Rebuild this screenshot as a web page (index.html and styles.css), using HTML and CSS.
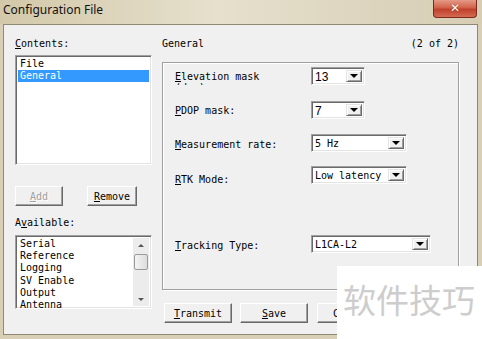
FILE: index.html
```html
<!DOCTYPE html>
<html lang="en">
<head>
  <meta charset="UTF-8">
  <meta name="viewport" content="width=device-width, initial-scale=1.0">
  <title>Configuration File</title>
  <link rel="stylesheet" href="styles.css">
</head>
<body>

  <div class="window">
    <div class="titlebar">
      <span class="title">Configuration File</span>
      <span class="close">&#x2715;</span>
    </div>

    <div class="client">
      <div class="left-col">
        <div class="label"><u>C</u>ontents:</div>
        <div class="listbox contents">
          <div class="item">File</div>
          <div class="item selected">General</div>
        </div>

        <div class="btn-row">
          <button class="btn btn-add" disabled><u>A</u>dd</button>
          <button class="btn btn-remove"><u>R</u>emove</button>
        </div>

        <div class="label label-avail">A<u>v</u>ailable:</div>
        <div class="listbox available">
          <div class="items">
            <div class="item">Serial</div>
            <div class="item">Reference</div>
            <div class="item">Logging</div>
            <div class="item">SV Enable</div>
            <div class="item">Output</div>
            <div class="item">Antenna</div>
          </div>
          <div class="scrollbar">
            <div class="sb-arrow"><span class="tri-up"></span></div>
            <div class="sb-track"><div class="sb-thumb"></div></div>
            <div class="sb-arrow"><span class="tri-down"></span></div>
          </div>
        </div>
      </div>

      <div class="right-col">
        <div class="header">
          <span>General</span>
          <span>(2 of 2)</span>
        </div>

        <div class="group">
          <div class="row r1">
            <div class="field-label elev"><u>E</u>levation mask<br>(deg)</div>
            <div class="combo w-small"><span class="value sans">13</span><span class="drop"><span class="tri-down"></span></span></div>
          </div>
          <div class="row r2">
            <div class="field-label"><u>P</u>DOP mask:</div>
            <div class="combo w-small"><span class="value sans">7</span><span class="drop"><span class="tri-down"></span></span></div>
          </div>
          <div class="row r3">
            <div class="field-label"><u>M</u>easurement rate:</div>
            <div class="combo w-mid"><span class="value">5 Hz</span><span class="drop"><span class="tri-down"></span></span></div>
          </div>
          <div class="row r4">
            <div class="field-label"><u>R</u>TK Mode:</div>
            <div class="combo w-mid"><span class="value">Low latency</span><span class="drop"><span class="tri-down"></span></span></div>
          </div>
          <div class="row r5">
            <div class="field-label"><u>T</u>racking Type:</div>
            <div class="combo w-wide"><span class="value">L1CA-L2</span><span class="drop"><span class="tri-down"></span></span></div>
          </div>
        </div>

        <div class="bottom-buttons">
          <button class="btn btn-wide"><u>T</u>ransmit</button>
          <button class="btn btn-wide"><u>S</u>ave</button>
          <button class="btn btn-wide">Cancel</button>
        </div>
      </div>
    </div>

    <div class="watermark">软件技巧</div>
  </div>

</body>
</html>
```

FILE: styles.css
```css
* {
  box-sizing: border-box;
}

body {
  margin: 0;
  width: 482px;
  height: 339px;
  overflow: hidden;
  background-color: #d8cfb6;
  font-family: "DejaVu Sans Mono", "Liberation Mono", monospace;
  font-size: 10px;
  color: #000;
}

.window {
  position: relative;
  height: 339px;
}

/* title bar */
.titlebar {
  height: 24px;
  display: flex;
  justify-content: space-between;
  align-items: flex-start;
  padding-left: 3px;
  background: linear-gradient(to right, #d3c8a9 0%, #e6e0cd 45%, #ddd5bf 75%, #d6cdb3 100%);
}

.title {
  font-family: "Noto Sans", sans-serif;
  font-size: 12px;
  line-height: 20px;
  color: #111;
}

.close {
  width: 44px;
  height: 18px;
  margin-right: 5px;
  border: 1px solid #7d2a1c;
  border-top: none;
  border-radius: 0 0 4px 4px;
  background: linear-gradient(to bottom, #e59a86 0%, #d2624a 45%, #c0412c 55%, #d36b52 100%);
  color: #fff;
  font-family: "DejaVu Sans", sans-serif;
  font-size: 12px;
  font-weight: bold;
  line-height: 16px;
  text-align: center;
  text-shadow: 0 0 1px #6d1d10;
}

/* client area */
.client {
  height: 311px;
  margin: 0 4px 0 3px;
  border: 1px solid #8f8873;
  background-color: #f0f0f0;
  display: flex;
  padding: 13px 0 0 11px;
}

.label {
  height: 12px;
  line-height: 12px;
}

/* list boxes */
.listbox {
  background-color: #fff;
  border: 1px solid;
  border-color: #a0a0a0 #fff #fff #a0a0a0;
  box-shadow: inset 1px 1px #696969, inset -1px -1px #e3e3e3;
  padding: 2px;
}

.contents {
  width: 137px;
  height: 110px;
  margin-top: 5px;
}

.item {
  height: 12px;
  line-height: 12px;
  padding-left: 2px;
  white-space: nowrap;
}

.item.selected {
  background-color: #3399ff;
  color: #fff;
}

.available {
  width: 137px;
  height: 74px;
  margin-top: 6px;
  display: flex;
  padding: 2px 2px 2px 2px;
}

.available .items {
  flex: 1;
}

.available .item {
  height: 12.2px;
  line-height: 12px;
}

.scrollbar {
  width: 16px;
  display: flex;
  flex-direction: column;
  background-color: #ececec;
}

.sb-arrow {
  height: 14px;
  display: flex;
  align-items: center;
  justify-content: center;
}

.sb-track {
  flex: 1;
  padding: 2px 1px 0 1px;
}

.sb-thumb {
  height: 16px;
  border: 1px solid #9a9a9a;
  border-radius: 2px;
  background: linear-gradient(to right, #f4f4f4, #dcdcdc);
}

.tri-up,
.tri-down {
  display: block;
  width: 0;
  height: 0;
  border-left: 4px solid transparent;
  border-right: 4px solid transparent;
}

.tri-up {
  border-bottom: 4px solid #444;
}

.tri-down {
  border-top: 4px solid #000;
}

.sb-arrow .tri-up,
.sb-arrow .tri-down {
  border-left-width: 3px;
  border-right-width: 3px;
  border-top-color: #555;
  border-bottom-color: #555;
}

.sb-arrow .tri-down {
  border-top-width: 3px;
}

.sb-arrow .tri-up {
  border-bottom-width: 3px;
}

/* buttons */
.btn {
  height: 20px;
  padding: 0;
  font-family: inherit;
  font-size: 10px;
  color: #000;
  background-color: #f0f0f0;
  border: 1px solid;
  border-color: #fff #696969 #696969 #fff;
  box-shadow: inset -1px -1px #a0a0a0;
}

.btn:disabled {
  color: #a0a0a0;
  text-shadow: 1px 1px #fff;
}

.btn-row {
  display: flex;
  margin-top: 21px;
}

.btn-add {
  width: 48px;
}

.btn-remove {
  width: 50px;
  margin-left: 24px;
}

.label-avail {
  margin-top: 11px;
}

/* right column */
.right-col {
  margin-left: 10px;
  width: 298px;
}

.header {
  height: 12px;
  line-height: 12px;
  display: flex;
  justify-content: space-between;
  padding-right: 1px;
}

.group {
  width: 297px;
  height: 228px;
  margin-top: 12px;
  border: 1px solid #a0a0a0;
  box-shadow: inset 1px 1px #fff, 1px 1px #fff;
  padding: 4px 0 0 12px;
}

.row {
  display: flex;
  align-items: flex-start;
}

.field-label {
  width: 136px;
  line-height: 12px;
  padding-top: 4px;
  white-space: nowrap;
}

.elev {
  height: 18px;
  line-height: 11px;
  padding-top: 4px;
  overflow: hidden;
}

.r2 { margin-top: 16px; }
.r3 { margin-top: 15px; }
.r4 { margin-top: 14px; }
.r5 { margin-top: 49px; }

.r1 { height: 18px; }
.r3 .field-label { padding-top: 5px; }
.r4 .field-label { padding-top: 8px; }
.r5 .field-label { padding-top: 5px; }

/* combo boxes */
.combo {
  height: 18px;
  display: flex;
  align-items: stretch;
  background-color: #fff;
  border: 1px solid;
  border-color: #a0a0a0 #fff #fff #a0a0a0;
  box-shadow: inset 1px 1px #696969, inset -1px -1px #e3e3e3;
  padding: 2px;
}

.w-small { width: 54px; }
.w-mid { width: 96px; }
.w-wide { width: 120px; }

.value {
  flex: 1;
  line-height: 14px;
  padding-left: 1px;
  white-space: nowrap;
}

.value.sans {
  font-family: "Liberation Sans", Arial, sans-serif;
  font-size: 12px;
}

.drop {
  width: 16px;
  display: flex;
  align-items: center;
  justify-content: center;
  background-color: #f0f0f0;
  border: 1px solid;
  border-color: #e3e3e3 #696969 #696969 #e3e3e3;
  box-shadow: inset 1px 1px #fff, inset -1px -1px #a0a0a0;
}

.drop .tri-down {
  border-left-width: 4px;
  border-right-width: 4px;
  border-top-width: 4px;
}

.bottom-buttons {
  display: flex;
  gap: 8px;
  margin-top: 13px;
  padding-left: 2px;
}

.btn-wide {
  width: 68px;
}

.bottom-buttons .btn-wide:last-child {
  margin-left: 1px;
}

/* overlay */
.watermark {
  position: absolute;
  left: 337px;
  top: 266px;
  width: 145px;
  height: 73px;
  background-color: #fff;
  color: #cdcdcd;
  font-family: "Noto Sans CJK SC", sans-serif;
  font-size: 33px;
  line-height: 66px;
  padding-left: 6px;
  white-space: nowrap;
}
```
